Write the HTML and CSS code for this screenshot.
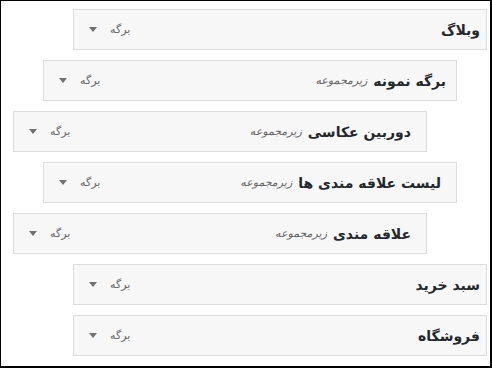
FILE: index.html
```html
<!DOCTYPE html>
<html lang="fa" dir="rtl">
<head>
<meta charset="utf-8">
<link rel="stylesheet" href="styles.css">
</head>
<body>
<div class="frame">
  <ul class="menu">
    <li class="item d0 p-top"><span class="title">وبلاگ</span><span class="controls"><span class="type">برگه</span><span class="arrow"></span></span></li>
    <li class="item d1 p-mid"><span class="title">برگه نمونه</span><span class="sub">زیرمجموعه</span><span class="controls"><span class="type">برگه</span><span class="arrow"></span></span></li>
    <li class="item d2 p-sub"><span class="title">دوربین عکاسی</span><span class="sub">زیرمجموعه</span><span class="controls"><span class="type">برگه</span><span class="arrow"></span></span></li>
    <li class="item d1 p-sub"><span class="title">لیست علاقه مندی ها</span><span class="sub">زیرمجموعه</span><span class="controls"><span class="type">برگه</span><span class="arrow"></span></span></li>
    <li class="item d2 p-sub"><span class="title">علاقه مندی</span><span class="sub">زیرمجموعه</span><span class="controls"><span class="type">برگه</span><span class="arrow"></span></span></li>
    <li class="item d0 p-top"><span class="title">سبد خرید</span><span class="controls"><span class="type">برگه</span><span class="arrow"></span></span></li>
    <li class="item d0 p-top"><span class="title">فروشگاه</span><span class="controls"><span class="type">برگه</span><span class="arrow"></span></span></li>
  </ul>
</div>
</body>
</html>
```
FILE: styles.css
```css
html, body {
  margin: 0;
  padding: 0;
  background: #fff;
}
body {
  font-family: "DejaVu Sans", "Noto Sans", sans-serif;
}
.frame {
  box-sizing: border-box;
  width: 492px;
  height: 368px;
  border-style: solid;
  border-color: #000;
  border-width: 1px 2px 2px 1px;
  padding: 8px 3px 0 0;
}
.menu {
  list-style: none;
  margin: 0;
  padding: 0;
  display: flex;
  flex-direction: column;
  gap: 10px;
}
.item {
  box-sizing: border-box;
  width: 414px;
  height: 41px;
  background: #f7f7f7;
  border: 1px solid #dcdcdc;
  display: flex;
  align-items: center;
  padding-left: 15px;
}
.d0 { margin-right: 0; }
.d1 { margin-right: 30px; }
.d2 { margin-right: 60px; }
.p-top { padding-right: 6px; }
.p-mid { padding-right: 10px; }
.p-sub { padding-right: 15px; }
.title {
  font-weight: bold;
  font-size: 14px;
  color: #23282d;
}
.sub {
  margin-right: 6px;
  font-size: 11px;
  font-style: italic;
  color: #666;
}
.controls {
  margin-right: auto;
  display: flex;
  align-items: center;
  gap: 13px;
}
.type {
  font-size: 11px;
  color: #666;
}
.arrow {
  width: 0;
  height: 0;
  border-left: 4px solid transparent;
  border-right: 4px solid transparent;
  border-top: 5px solid #707070;
}
```
